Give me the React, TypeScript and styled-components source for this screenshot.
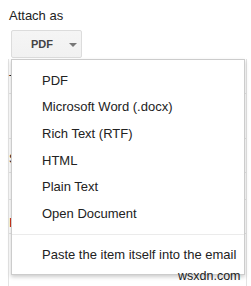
import React from "react";
import styled, { createGlobalStyle } from "styled-components";

const Global = createGlobalStyle`
  html, body { margin: 0; padding: 0; background: #fff; }
  body { font-family: Arial, "Liberation Sans", sans-serif; overflow: hidden; }
`;

const Page = styled.div`
  position: relative;
  width: 251px;
  height: 286px;
  padding: 8px 0 0 8px;
  box-sizing: border-box;
  overflow: hidden;
`;

const Label = styled.div`
  font-size: 13px;
  line-height: 16px;
  color: #222;
  padding-left: 1px;
`;

const Button = styled.div`
  margin: 6px 0 0 3px;
  width: 71px;
  height: 28px;
  box-sizing: border-box;
  display: flex;
  align-items: center;
  padding-left: 19px;
  gap: 16px;
  border: 1px solid #dcdcdc;
  border-radius: 2px;
  background: linear-gradient(#f5f5f5, #f1f1f1);
  color: #444;
  font-size: 11px;
  font-weight: bold;
`;

const Caret = styled.span`
  width: 0;
  height: 0;
  border-left: 4px solid transparent;
  border-right: 4px solid transparent;
  border-top: 4px solid #777;
  margin-top: 1px;
`;

const Panel = styled.div`
  margin-top: 1px;
  width: 239px;
  box-sizing: border-box;
  border-left: 1px solid #e3e3e3;
  border-right: 1px solid #e3e3e3;
`;

const Row = styled.div<{ $h: number; $pad: number; $red?: boolean }>`
  height: ${(p) => p.$h}px;
  box-sizing: border-box;
  border-bottom: 1px solid #e5e5e5;
  padding-top: ${(p) => p.$pad}px;
  font-size: 13px;
  line-height: 16px;
  color: ${(p) => (p.$red ? "#a00" : "#222")};
  white-space: nowrap;
`;

const Menu = styled.div`
  position: absolute;
  left: 11px;
  top: 59px;
  width: 234px;
  box-sizing: border-box;
  background: #fff;
  border: 1px solid rgba(0, 0, 0, 0.2);
  box-shadow: 0 2px 4px rgba(0, 0, 0, 0.2);
  padding: 7px 0 6px;
`;

const Item = styled.div`
  height: 26.6px;
  display: flex;
  align-items: center;
  padding-left: 30px;
  font-size: 13px;
  color: #222;
  white-space: nowrap;
`;

const Separator = styled.div`
  height: 1px;
  margin: 7px 0;
  background: #ebebeb;
`;

const Watermark = styled.div`
  position: absolute;
  left: 178px;
  top: 268px;
  font-size: 12.5px;
  line-height: 16px;
  color: #222;
`;

const items = [
  "PDF",
  "Microsoft Word (.docx)",
  "Rich Text (RTF)",
  "HTML",
  "Plain Text",
  "Open Document",
];

export default function App() {
  return (
    <Page>
      <Global />
      <Label>Attach as</Label>
      <Button>
        <span>PDF</span>
        <Caret />
      </Button>
      <Panel>
        <Row $h={35} $pad={13}>T</Row>
        <Row $h={45} $pad={14} />
        <Row $h={34} $pad={12}>S</Row>
        <Row $h={27} $pad={6} />
        <Row $h={34} $pad={15} $red>I</Row>
        <Row $h={60} $pad={10} />
      </Panel>
      <Menu>
        {items.map((t) => (
          <Item key={t}>{t}</Item>
        ))}
        <Separator />
        <Item>Paste the item itself into the email</Item>
      </Menu>
      <Watermark>wsxdn.com</Watermark>
    </Page>
  );
}
